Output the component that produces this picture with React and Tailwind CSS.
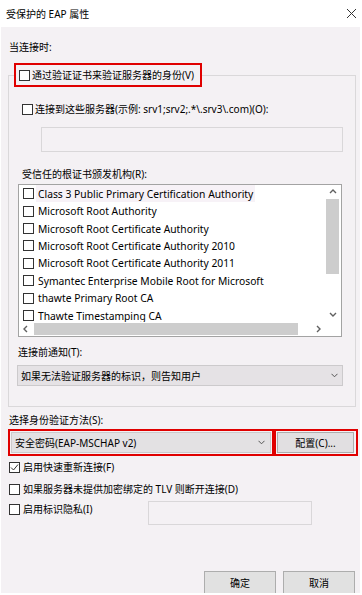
import React from "react";

function Box({ checked }) {
  return (
    <span className="w-[11px] h-[11px] border border-[#333333] bg-white shrink-0 flex items-center justify-center">
      {checked && (
        <svg width="9" height="9" viewBox="0 0 9 9">
          <polyline points="1,4.5 3.5,7 8,1.5" fill="none" stroke="#333" strokeWidth="1" />
        </svg>
      )}
    </span>
  );
}

function Down({ color = "#555" }) {
  return (
    <svg width="7" height="5" viewBox="0 0 7 5" className="shrink-0">
      <polyline points="0.5,0.8 3.5,3.8 6.5,0.8" fill="none" stroke={color} strokeWidth="1" />
    </svg>
  );
}

function Arrow({ dir }) {
  const pts = {
    up: "1,5 4,2 7,5",
    down: "1,2 4,5 7,2",
    left: "5,1 2,4 5,7",
    right: "2,1 5,4 2,7",
  }[dir];
  return (
    <svg width="8" height="8" viewBox="0 0 8 8">
      <polyline points={pts} fill="none" stroke="#606060" strokeWidth="1.4" />
    </svg>
  );
}

const items = [
  "Class 3 Public Primary Certification Authority",
  "Microsoft Root Authority",
  "Microsoft Root Certificate Authority",
  "Microsoft Root Certificate Authority 2010",
  "Microsoft Root Certificate Authority 2011",
  "Symantec Enterprise Mobile Root for Microsoft",
  "thawte Primary Root CA",
  "Thawte Timestamping CA",
];

export default function App() {
  return (
    <div className="w-[362px] h-[595px] bg-white overflow-hidden text-[10px] leading-[14px] text-black font-['Noto_Sans','Noto_Sans_CJK_SC',sans-serif]">
      <div className="h-[27px] flex items-center justify-between pl-[6px] pr-[6px]">
        <span>受保护的 EAP 属性</span>
        <svg width="9" height="9" viewBox="0 0 9 9">
          <path d="M0 0L9 9M9 0L0 9" stroke="#333" strokeWidth="1" />
        </svg>
      </div>
      <div className="ml-[1px] w-[359px] h-[566px] bg-[#f4f1f4] pl-[8px] pt-[13px] flex flex-col overflow-hidden">
        <div className="h-[14px]">当连接时:</div>
        <fieldset className="ml-[-1px] w-[348px] mt-[9px] border border-[#dad8da] p-0 m-0">
          <legend className="ml-[5px] p-0">
            <div className="border-2 border-[#e00000] h-[24px] flex items-center pl-[3px] pr-[6px] gap-[2px]">
              <Box />
              <span>通过验证证书来验证服务器的身份(V)</span>
            </div>
          </legend>
          <div className="pl-[9px] pr-[12px] pb-[20px] flex flex-col">
            <div className="mt-[15px] ml-[4px] h-[14px] flex items-center gap-[2px]">
              <Box />
              <span>连接到这些服务器(示例: srv1;srv2;.*\.srv3\.com)(O):</span>
            </div>
            <div className="mt-[11px] ml-[23px] h-[25px] border border-[#d9d7d9]" />
            <div className="mt-[15px] ml-[4px] h-[14px]">受信任的根证书颁发机构(R):</div>
            <div className="mt-[3px] mr-[1px] h-[153px] border border-[#a3a3a3] bg-white flex flex-col">
              <div className="flex flex-1 min-h-0">
                <div className="flex-1 overflow-hidden text-[10.3px]">
                  {items.map((t, i) => (
                    <div key={t} className="h-[17.43px] flex items-center shrink-0">
                      <span className="ml-[4px]">
                        <Box />
                      </span>
                      <span className={"ml-[2px] px-[2px] h-[17px] flex items-center whitespace-nowrap " + (i === 0 ? "bg-[#f7f2f7]" : "")}>
                        {t}
                      </span>
                    </div>
                  ))}
                </div>
                <div className="w-[15px] flex flex-col">
                  <div className="h-[14px] flex items-center justify-center pr-[2px]">
                    <Arrow dir="up" />
                  </div>
                  <div className="w-[13px] h-[75px] bg-[#cdcdcd]" />
                  <div className="flex-1" />
                  <div className="h-[14px] flex items-center justify-center pr-[2px]">
                    <Arrow dir="down" />
                  </div>
                </div>
              </div>
              <div className="h-[14px] flex items-center">
                <div className="w-[14px] flex items-center justify-center">
                  <Arrow dir="left" />
                </div>
                <div className="ml-[1px] w-[264px] h-[12px] bg-[#cdcdcd]" />
                <div className="flex-1" />
                <div className="w-[14px] flex items-center justify-center">
                  <Arrow dir="right" />
                </div>
                <div className="w-[15px]" />
              </div>
            </div>
            <div className="mt-[8px] h-[14px]">连接前通知(T):</div>
            <div className="mt-[6px] ml-[-1px] h-[21px] border border-[#cccacc] bg-[#e5e2e5] flex items-center pl-[3px] pr-[4px]">
              <span className="flex-1">如果无法验证服务器的标识，则告知用户</span>
              <Down />
            </div>
          </div>
        </fieldset>
        <div className="mt-[6px] h-[14px]">选择身份验证方法(S):</div>
        <div className="mt-[2px] ml-[-1px] flex">
          <div className="w-[266px] h-[27px] border-2 border-[#e00000] p-[1px]">
            <div className="h-[21px] border border-[#cccacc] bg-[#e3e1e3] flex items-center pl-[3px] pr-[5px]">
              <span className="flex-1">安全密码(EAP-MSCHAP v2)</span>
              <Down />
            </div>
          </div>
          <div className="w-[84px] h-[27px] border-2 border-[#e00000] pl-[1px] pr-[2px] py-[1px]">
            <div className="h-[21px] border border-[#adadad] bg-[#e1dfe1] flex items-center justify-center">
              配置(C)...
            </div>
          </div>
        </div>
        <div className="mt-[4px] h-[14px] flex items-center gap-[3px]">
          <Box checked />
          <span>启用快速重新连接(F)</span>
        </div>
        <div className="mt-[8px] h-[14px] flex items-center gap-[3px]">
          <Box />
          <span>如果服务器未提供加密绑定的 TLV 则断开连接(D)</span>
        </div>
        <div className="mt-[5px] flex items-start">
          <div className="w-[139px] mt-[1px] h-[14px] flex items-center gap-[3px]">
            <Box />
            <span>启用标识隐私(I)</span>
          </div>
          <div className="w-[164px] h-[24px] border border-[#d9d7d9]" />
        </div>
        <div className="mt-auto mb-[-1px] flex justify-end gap-[7px] pr-[5px]">
          <div className="w-[72px] h-[23px] border border-[#adadad] bg-[#e1e1e1] flex items-center justify-center">确定</div>
          <div className="w-[72px] h-[23px] border border-[#adadad] bg-[#e1e1e1] flex items-center justify-center">取消</div>
        </div>
      </div>
    </div>
  );
}
